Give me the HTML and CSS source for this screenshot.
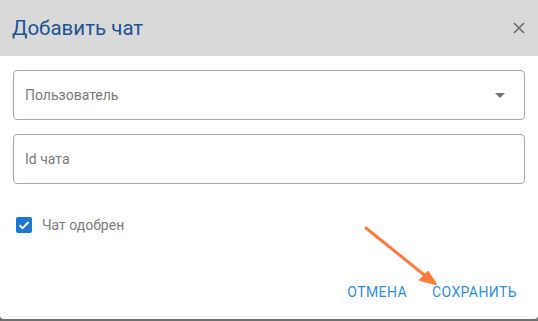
FILE: index.html
```html
<!DOCTYPE html>
<html lang="ru">
<head>
    <meta charset="UTF-8">
    <meta name="viewport" content="width=device-width, initial-scale=1.0">
    <title>Добавить чат</title>
    <link rel="stylesheet" href="styles.css">
</head>
<body>

<div class="dialog">
    <div class="dialog-header">
        <h2>Добавить чат</h2>
        <button class="close-btn" aria-label="Закрыть">
            <svg width="12" height="12" viewBox="0 0 12 12">
                <path d="M1 1L11 11M11 1L1 11" stroke="#6b6b6b" stroke-width="1.6" fill="none"/>
            </svg>
        </button>
    </div>

    <div class="dialog-body">
        <div class="field select-field">
            <span class="placeholder">Пользователь</span>
            <span class="caret"></span>
        </div>
        <div class="field">
            <span class="placeholder">Id чата</span>
        </div>
        <label class="checkbox-row">
            <span class="checkbox">
                <svg width="16" height="16" viewBox="0 0 16 16">
                    <path d="M3.5 8.2L6.6 11.2L12.6 5" stroke="#fff" stroke-width="2" fill="none"/>
                </svg>
            </span>
            Чат одобрен
        </label>
    </div>

    <div class="dialog-actions">
        <button class="text-btn">Отмена</button>
        <button class="text-btn">Сохранить</button>
    </div>

    <!-- annotation arrow over the dialog -->
    <svg class="pointer-arrow" width="538" height="321" viewBox="0 0 538 321">
        <line x1="366" y1="228" x2="428" y2="278" stroke="#fd7c3c" stroke-width="3" stroke-linecap="round"/>
        <path d="M436 284L420 280L428 272Z" fill="#fd7c3c" stroke="#fd7c3c" stroke-width="2" stroke-linejoin="round"/>
    </svg>
</div>

</body>
</html>
```

FILE: styles.css
```css
body {
    margin: 0;
    padding: 0;
    background: #6e6e6e;
    font-family: Roboto, Arial, sans-serif;
    color: #333;
}
.dialog {
    position: relative;
    width: 538px;
    height: 319px;
    background-color: #fff;
    border-radius: 0 0 4px 4px;
    display: flex;
    flex-direction: column;
}
.dialog-header {
    height: 56px;
    background-color: #d9d9d9;
    display: flex;
    align-items: center;
    justify-content: space-between;
    padding: 0 13px 0 12px;
}
.dialog-header h2 {
    margin: 0;
    font-size: 20.5px;
    font-weight: 400;
    color: #1b5394;
}
.close-btn {
    background: none;
    border: none;
    padding: 0;
    width: 12px;
    height: 12px;
    cursor: pointer;
    display: flex;
}
.dialog-body {
    padding: 14px 13px 0 13px;
    display: flex;
    flex-direction: column;
    gap: 14px;
}
.field {
    height: 48px;
    border: 1px solid #a8a8a8;
    border-radius: 4px;
    display: flex;
    align-items: center;
    justify-content: space-between;
    padding: 0 19px 0 11px;
}
.placeholder {
    font-size: 14px;
    color: #7a7a7a;
}
.caret {
    width: 0;
    height: 0;
    border-left: 5px solid transparent;
    border-right: 5px solid transparent;
    border-top: 5px solid #757575;
}
.checkbox-row {
    display: flex;
    align-items: center;
    gap: 10px;
    margin-top: 19px;
    padding-left: 3px;
    font-size: 14px;
    color: #7a7a7a;
}
.checkbox {
    width: 16px;
    height: 16px;
    border-radius: 2px;
    background-color: #1976d2;
    display: flex;
}
.dialog-actions {
    margin-top: auto;
    display: flex;
    justify-content: flex-end;
    gap: 9px;
    padding: 0 13px 13px 0;
}
.text-btn {
    background: none;
    border: none;
    padding: 6px 8px;
    font-family: Roboto, Arial, sans-serif;
    font-size: 14px;
    font-weight: 400;
    letter-spacing: 0.4px;
    text-transform: uppercase;
    color: #2b8de4;
    cursor: pointer;
}
.pointer-arrow {
    position: absolute;
    left: 0;
    top: 0;
    pointer-events: none;
}
```
